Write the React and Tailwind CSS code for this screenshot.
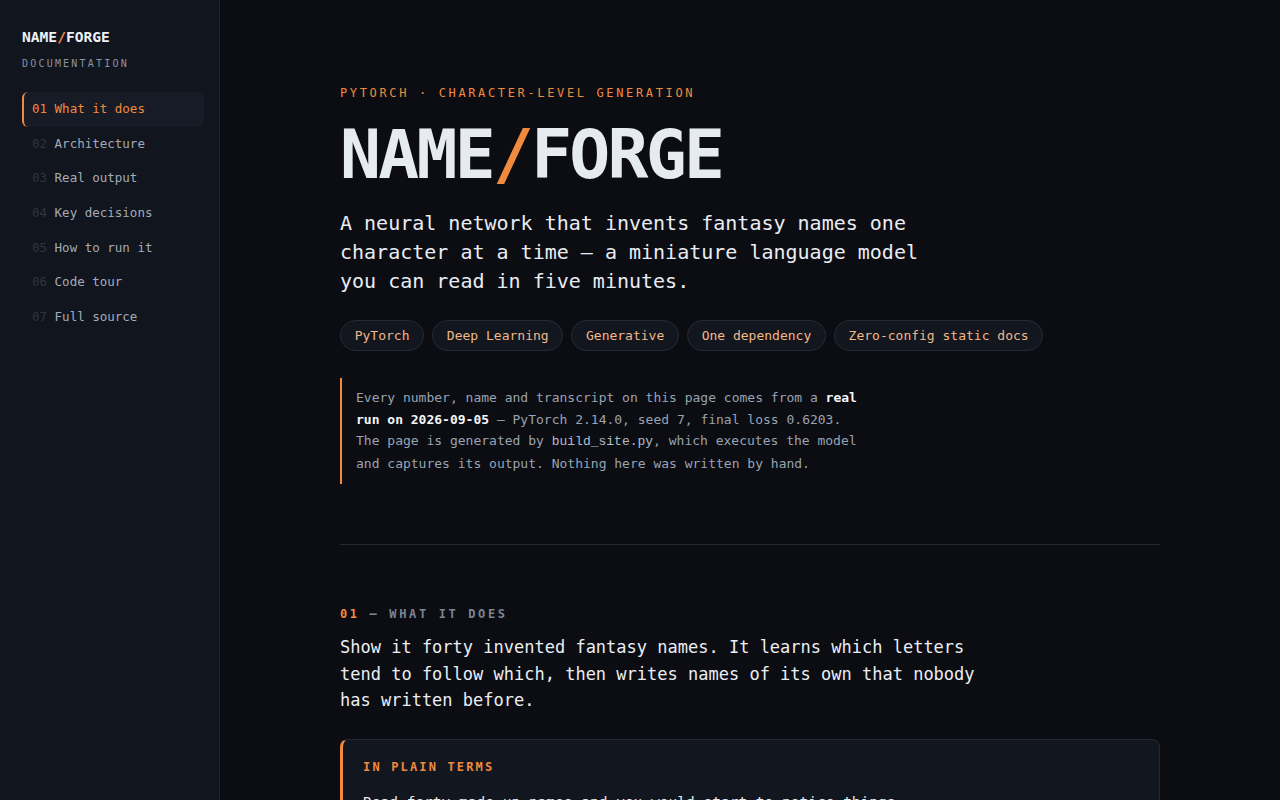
export default function App() {
  const nav = [
    ["01", "What it does"],
    ["02", "Architecture"],
    ["03", "Real output"],
    ["04", "Key decisions"],
    ["05", "How to run it"],
    ["06", "Code tour"],
    ["07", "Full source"],
  ];
  const tags = ["PyTorch", "Deep Learning", "Generative", "One dependency", "Zero-config static docs"];
  return (
    <div className="flex h-[800px] w-full overflow-hidden bg-[#0b0d12] font-['DejaVu_Sans_Mono',monospace]">
      <aside className="w-[220px] shrink-0 border-r border-[#1e222b] bg-[#11151d] pl-[22px] pr-[15px] pt-[28px]">
        <div className="text-[14.6px] font-bold leading-[18px] text-[#eef1f6]">
          NAME<span className="text-[#f08a3e]">/</span>FORGE
        </div>
        <div className="mt-[11px] text-[10px] leading-[14px] tracking-[0.22em] text-[#8a92a0]">DOCUMENTATION</div>
        <nav className="mt-[21px] flex flex-col">
          {nav.map(([n, label], i) =>
            i === 0 ? (
              <div
                key={n}
                className="flex h-[34.67px] items-center rounded-md border-l-2 border-[#f08a3e] bg-[#161b25] pl-[8px] text-[12.5px] text-[#f08a3e]"
              >
                {n} {label}
              </div>
            ) : (
              <div key={n} className="flex h-[34.67px] items-center border-l-2 border-transparent pl-[8px] text-[12.5px]">
                <span className="text-[#2f3540]">{n}</span>
                <span className="whitespace-pre text-[#a3abb9]"> {label}</span>
              </div>
            )
          )}
        </nav>
      </aside>
      <main className="min-w-0 flex-1 overflow-hidden">
        <div className="mx-auto w-[820px] pt-[84px]">
          <div className="text-[12px] leading-[18px] tracking-[0.22em] text-[#f08a3e]">
            PYTORCH · CHARACTER-LEVEL GENERATION
          </div>
          <h1 className="mt-[19px] text-[68px] font-bold leading-none tracking-[-0.04em] text-[#e6eaf1]">
            NAME<span className="text-[#f08a3e]">/</span>FORGE
          </h1>
          <p className="mt-[19.5px] max-w-[600px] text-[20px] leading-[29px] text-[#e9ecf2]">
            A neural network that invents fantasy names one character at a time — a miniature language model you can
            read in five minutes.
          </p>
          <div className="mt-[24.5px] flex flex-wrap gap-[8px]">
            {tags.map((t) => (
              <span
                key={t}
                className="flex h-[31px] items-center rounded-full border border-[#262b36] bg-[#12161e] px-[13.7px] text-[13px] text-[#f3b88a]"
              >
                {t}
              </span>
            ))}
          </div>
          <div className="mt-[27px] border-l-2 border-[#f08a3e] pb-[10px] pl-[14px] pt-[9px]">
            <p className="max-w-[510px] text-[13px] leading-[21.5px] text-[#9aa3b2]">
              Every number, name and transcript on this page comes from a{" "}
              <strong className="font-bold text-[#f4f6fa]">real run on 2026-09-05</strong> — PyTorch 2.14.0, seed 7, final
              loss 0.6203. The page is generated by <code className="text-[#b4bcc9]">build_site.py</code>, which executes
              the model and captures its output. Nothing here was written by hand.
            </p>
          </div>
          <hr className="mt-[60px] border-0 border-t border-[#242832]" />
          <div className="mt-[60px] text-[12px] font-bold leading-[18px] tracking-[0.22em] text-[#7d8594]">
            <span className="text-[#f08a3e]">01</span> — WHAT IT DOES
          </div>
          <p className="mt-[11px] max-w-[660px] text-[17px] leading-[26.5px] text-[#eceef3]">
            Show it forty invented fantasy names. It learns which letters tend to follow which, then writes names of its
            own that nobody has written before.
          </p>
          <div className="mt-[25px] rounded-lg border border-[#232833] border-l-[3px] border-l-[#f08a3e] bg-[#12161e] pl-[20px] pr-[24px] pt-[18px] pb-[20px]">
            <div className="text-[12px] font-bold leading-[18px] tracking-[0.18em] text-[#f08a3e]">IN PLAIN TERMS</div>
            <p className="mt-[14px] text-[14.5px] leading-[24px] text-[#e6e9ef]">
              Read forty made-up names and you would start to notice things.
            </p>
          </div>
        </div>
      </main>
    </div>
  );
}
